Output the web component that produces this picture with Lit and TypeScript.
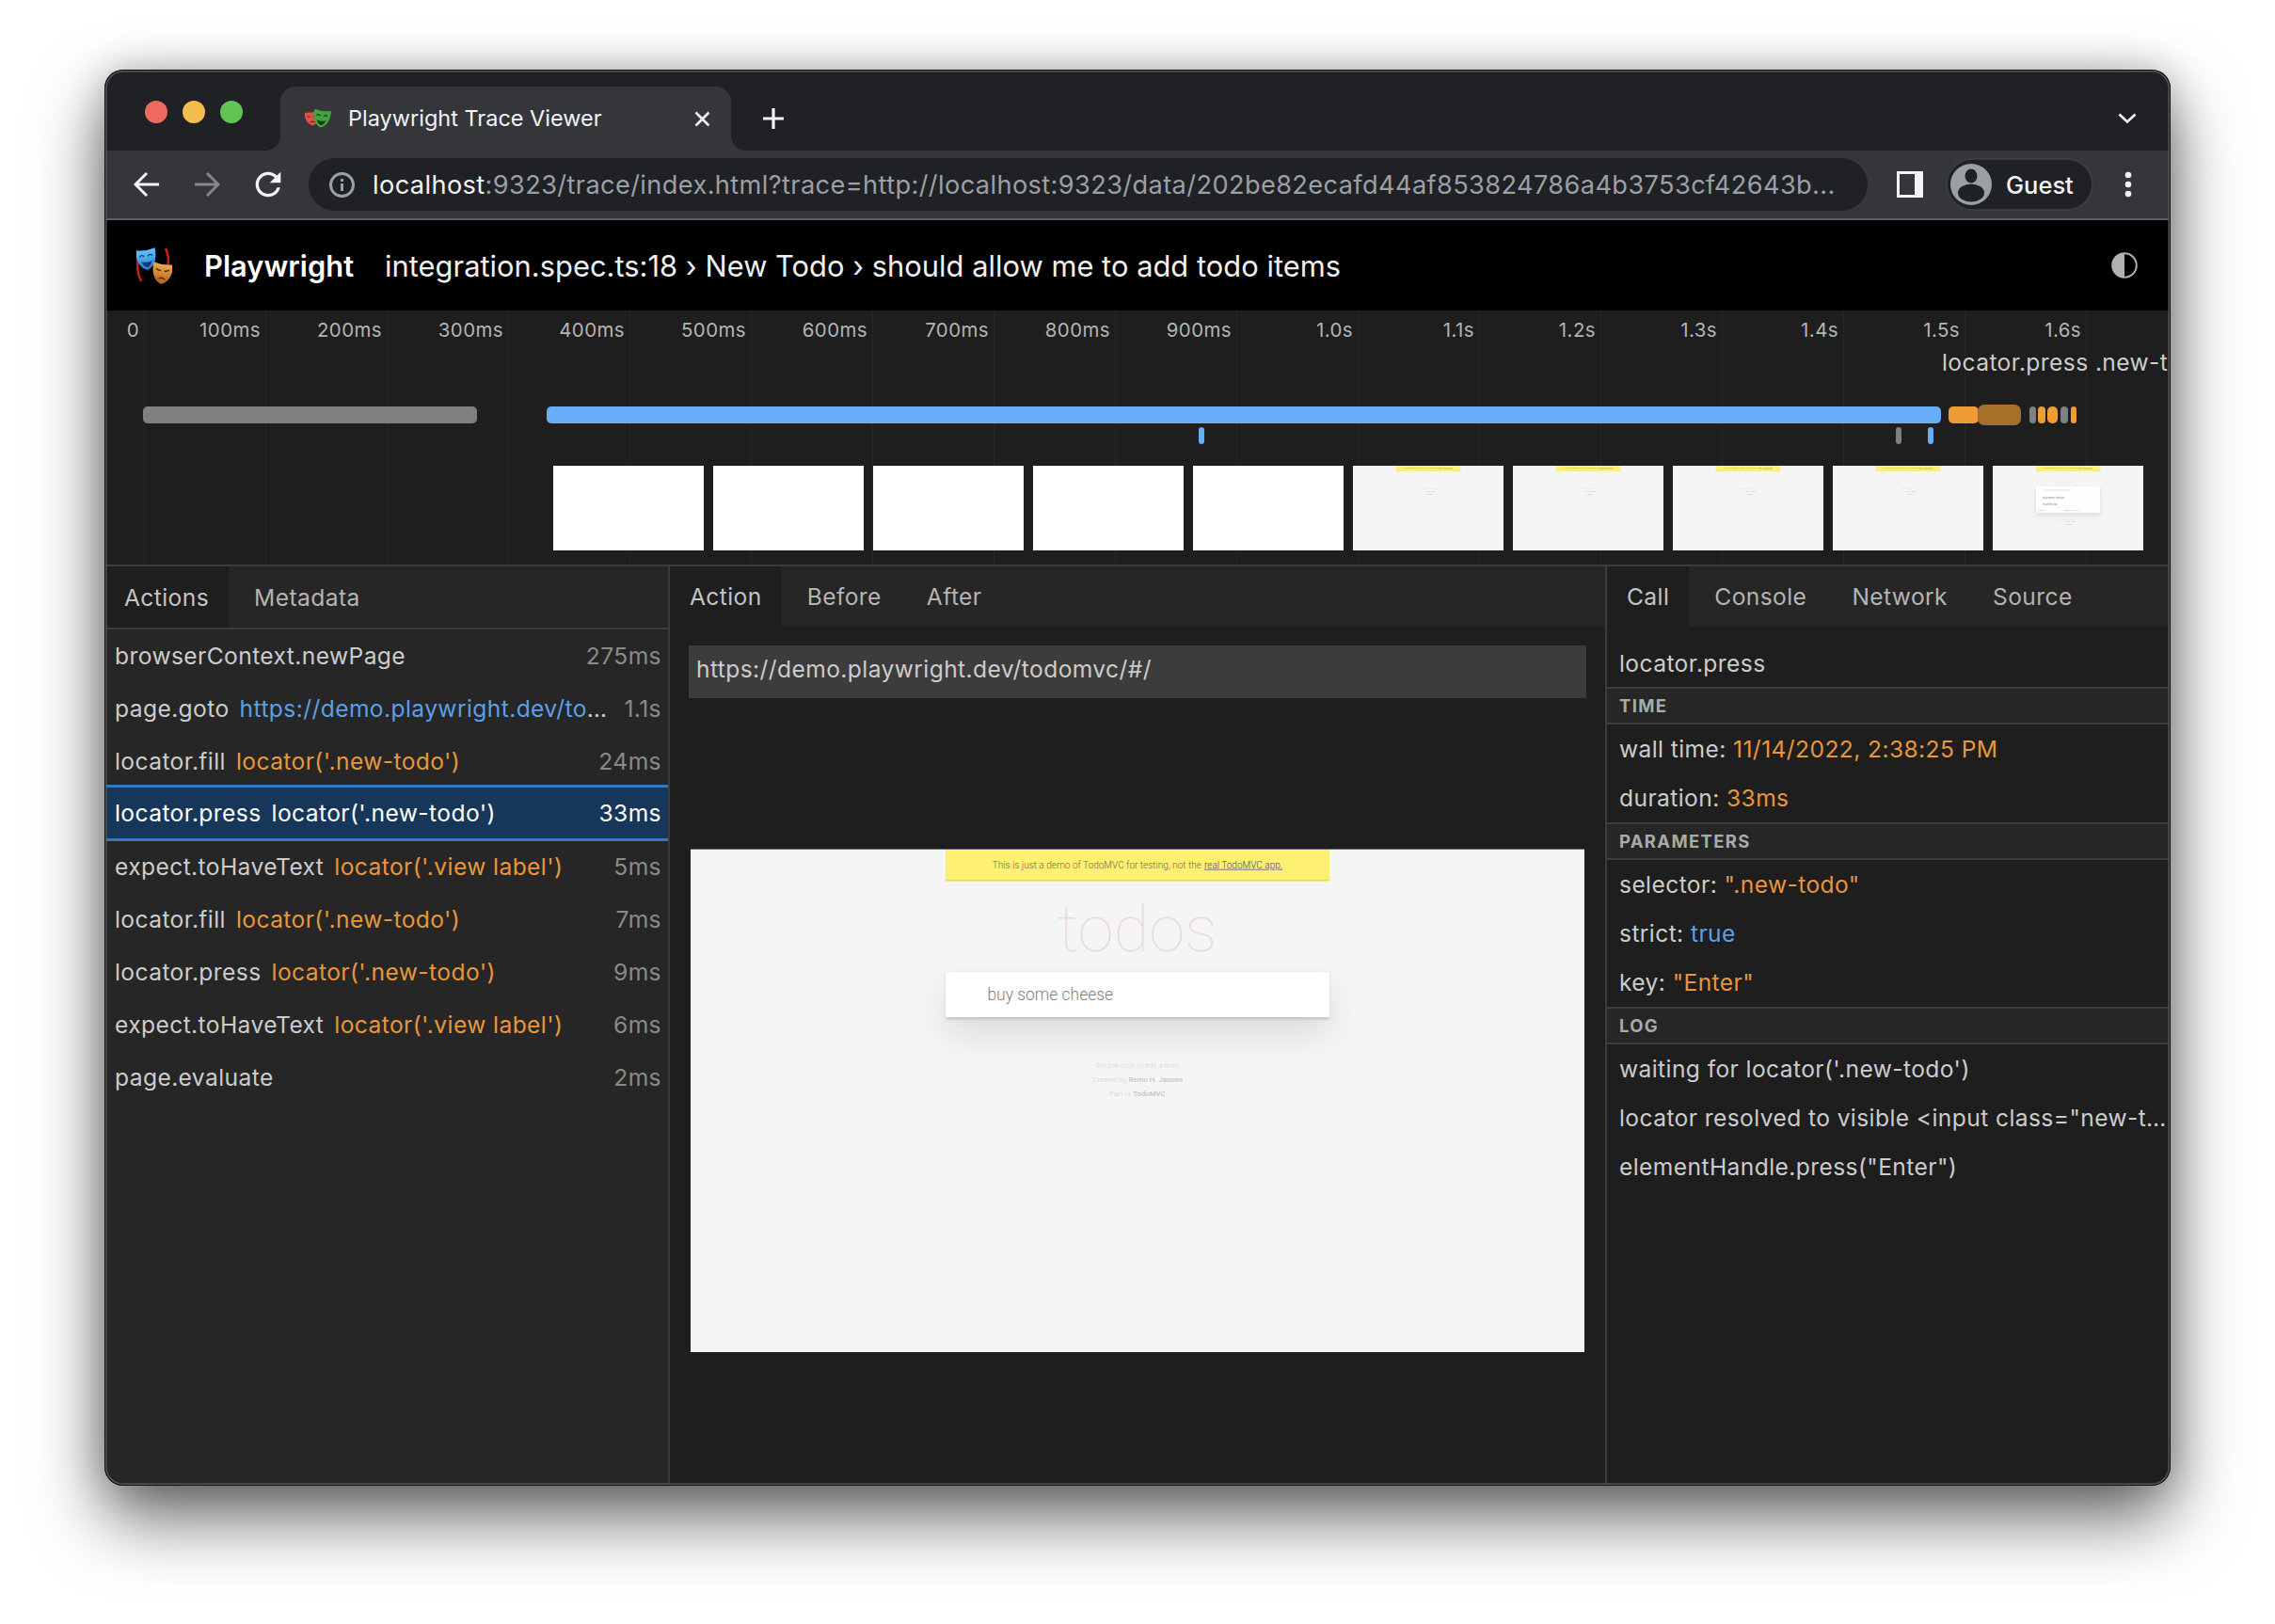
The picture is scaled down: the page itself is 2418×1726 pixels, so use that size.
import { LitElement, css, html, svg } from 'lit';
import { customElement, property } from 'lit/decorators.js';

// ---- trace data ----
const actions = [
  { name: 'browserContext.newPage', time: '275ms' },
  { name: 'page.goto', link: 'https://demo.playwright.dev/todomvc/', time: '1.1s' },
  { name: 'locator.fill', sel: "locator('.new-todo')", time: '24ms' },
  { name: 'locator.press', sel: "locator('.new-todo')", time: '33ms', selected: true },
  { name: 'expect.toHaveText', sel: "locator('.view label')", time: '5ms' },
  { name: 'locator.fill', sel: "locator('.new-todo')", time: '7ms' },
  { name: 'locator.press', sel: "locator('.new-todo')", time: '9ms' },
  { name: 'expect.toHaveText', sel: "locator('.view label')", time: '6ms' },
  { name: 'page.evaluate', time: '2ms' },
];

const tickLabels = ['0', '100ms', '200ms', '300ms', '400ms', '500ms', '600ms', '700ms', '800ms', '900ms',
  '1.0s', '1.1s', '1.2s', '1.3s', '1.4s', '1.5s', '1.6s'];

// x positions are relative to the window's left edge
const bars = [
  { x: 41, w: 355, c: 'gray' },
  { x: 470, w: 1482, c: 'blue' },
  { x: 1960, w: 32, c: 'orange' },
  { x: 1991, w: 46, c: 'sel' },
  { x: 2046, w: 7, c: 'gray' },
  { x: 2055, w: 8, c: 'orange' },
  { x: 2065, w: 11, c: 'orange' },
  { x: 2079, w: 8, c: 'gray' },
  { x: 2090, w: 6, c: 'orange' },
];
const marks = [
  { x: 1163, c: 'blue' },
  { x: 1904, c: 'gray' },
  { x: 1938, c: 'blue' },
];
const shots = ['white', 'white', 'white', 'white', 'white', 'empty', 'empty', 'empty', 'empty', 'list'];

// ---- masks for the logo and the favicon ----
const shield = 'M-10.5,-10.5 Q0,-7.5 10.5,-10.5 C11.5,-2 9,9 0,12 C-9,9 -11.5,-2 -10.5,-10.5Z';
const mask = (x: number, y: number, rot: number, scale: number, fill: string, happy: boolean, ink: string) => svg`
  <g transform="translate(${x} ${y}) rotate(${rot}) scale(${scale})">
    <path d=${shield} fill=${fill}></path>
    ${happy
      ? svg`<path d="M-7,-2.5 Q-4.5,-5.5 -2,-2.5 M2,-2.5 Q4.5,-5.5 7,-2.5" fill="none" stroke=${ink} stroke-width="1.4"></path>
            <path d="M-6,2.5 Q0,5 6,2.5 Q3,9 0,9 Q-3,9 -6,2.5Z" fill=${ink}></path>`
      : svg`<path d="M-7,-4 Q-4.5,-1.5 -2,-2.5 M2,-2.5 Q4.5,-1.5 7,-4" fill="none" stroke=${ink} stroke-width="1.4"></path>
            <path d="M-5,7.5 Q0,1.5 5,7.5 Q0,5 -5,7.5Z" fill=${ink}></path>`}
  </g>`;

@customElement('todo-shot')
export class TodoShot extends LitElement {
  @property() state = 'main';
  @property({ type: Number }) scale = 1;

  static styles = css`
    :host { display: block; overflow: hidden; background: #f5f5f5; }
    .page {
      width: 1280px;
      height: 720px;
      transform-origin: 0 0;
      font-family: Roboto, 'Liberation Sans', sans-serif;
      font-weight: 300;
      letter-spacing: 0;
      color: #4d4d4d;
      background: #f5f5f5;
      display: flex;
      flex-direction: column;
      align-items: center;
    }
    .banner {
      width: 550px;
      height: 45px;
      box-sizing: border-box;
      flex: none;
      background: #fef071;
      border-bottom: 2px solid #e3da60;
      display: flex;
      align-items: center;
      justify-content: center;
      font-size: 13.5px;
      white-space: nowrap;
      color: #6d6b4e;
    }
    .banner a { color: #4b3f8f; text-decoration: underline; margin-left: 4px; }
    h1 {
      margin: 0;
      height: 130px;
      flex: none;
      font-size: 93px;
      line-height: 138px;
      font-weight: 100;
      color: rgba(175, 47, 47, 0.13);
    }
    .box {
      width: 550px;
      flex: none;
      background: #fff;
      box-shadow: 0 2px 4px rgba(0, 0, 0, 0.2), 0 25px 50px rgba(0, 0, 0, 0.1);
    }
    .input {
      height: 65px;
      padding-left: 60px;
      display: flex;
      align-items: center;
      font-size: 23.5px;
      color: #808080;
    }
    .input.hint { font-style: italic; color: #ccc; }
    .item {
      height: 58px;
      padding-left: 60px;
      display: flex;
      align-items: center;
      font-size: 24px;
      border-top: 1px solid #ededed;
      box-sizing: border-box;
    }
    .bottom {
      height: 40px;
      display: flex;
      align-items: center;
      justify-content: space-between;
      padding: 0 15px;
      font-size: 14px;
      color: #777;
      border-top: 1px solid #e6e6e6;
    }
    .bottom span + span { margin-left: 10px; }
    .foot {
      flex: none;
      margin-top: 59px;
      font-size: 10.5px;
      line-height: 20.5px;
      text-align: center;
      color: #d4d4d4;
    }
    .foot b { font-weight: 500; color: #c4c4c4; }
    .empty .foot { margin-top: 145px; }
    .list .foot { margin-top: 50px; }
  `;

  render() {
    if (this.state === 'white') {
      return html`<div class="page" style="background:#fff"></div>`;
    }
    const foot = html`<div class="foot">
      <div>Double-click to edit a todo</div>
      <div>Created by <b>Remo H. Jansen</b></div>
      <div>Part of <b>TodoMVC</b></div>
    </div>`;
    return html`<div class="page ${this.state}" style="transform: scale(${this.scale})">
      <div class="banner">This is just a demo of TodoMVC for testing, not the <a>real TodoMVC app.</a></div>
      ${this.state === 'empty' ? '' : html`<h1>todos</h1>`}
      ${this.state === 'main' ? html`<div class="box"><div class="input">buy some cheese</div></div>` : ''}
      ${this.state === 'list'
        ? html`<div class="box">
            <div class="input hint">What needs to be done?</div>
            <div class="item">buy some cheese</div>
            <div class="item">feed the cat</div>
            <div class="bottom"><span>2 items left</span><span>All Active Completed</span><span></span></div>
          </div>`
        : ''}
      ${foot}
    </div>`;
  }
}

@customElement('app-root')
export class AppRoot extends LitElement {
  static styles = css`
    :host {
      display: block;
      box-sizing: border-box;
      height: 1726px;
      padding: 74px 111px 0;
      background: #fff;
      overflow: hidden;
      font-family: Inter, 'Noto Sans', sans-serif;
      font-size: 24.6px;
      letter-spacing: 0.4px;
      color: #ccc;
    }
    .window {
      position: relative;
      height: 1505px;
      border-radius: 20px;
      overflow: hidden;
      display: flex;
      flex-direction: column;
      background: #1e1e1e;
    }
    .shadow {
      height: 1505px;
      border-radius: 20px;
      box-shadow: 0 34px 75px rgba(0, 0, 0, 0.6), 0 0 40px rgba(0, 0, 0, 0.22);
    }
    .window::after {
      content: '';
      position: absolute;
      inset: 0;
      border-radius: inherit;
      box-shadow: inset 0 0 0 1px #0c0c0c, inset 0 0 0 2.5px #565656;
      pointer-events: none;
    }

    /* browser chrome */
    .tabstrip {
      height: 86px;
      flex: none;
      display: flex;
      align-items: flex-start;
      background: #202124;
      padding: 0 36px 0 43px;
      letter-spacing: 0;
    }
    .lights { display: flex; gap: 16px; margin-top: 33px; }
    .light { width: 24px; height: 24px; border-radius: 50%; }
    .red { background: #ee6a5f; }
    .yellow { background: #f5bd4f; }
    .green { background: #61c454; }
    .tab {
      position: relative;
      width: 479px;
      height: 68px;
      margin: 18px 0 0 40px;
      display: flex;
      align-items: center;
      box-sizing: border-box;
      padding: 0 22px 0 26px;
      background: #35363a;
      border-radius: 16px 16px 0 0;
      color: #f1f3f4;
      font-size: 23.5px;
      white-space: nowrap;
    }
    .tab::before, .tab::after {
      content: '';
      position: absolute;
      bottom: 0;
      width: 16px;
      height: 16px;
    }
    .tab::before { left: -16px; background: radial-gradient(circle at 0 0, #202124 15.5px, #35363a 16.5px); }
    .tab::after { right: -16px; background: radial-gradient(circle at 100% 0, #202124 15.5px, #35363a 16.5px); }
    .tab-title { flex: 1; margin: 0 0 1px 18px; }
    .plus { margin: 40px 0 0 33px; }
    .chevron { margin: 46px 0 0 auto; }

    .toolbar {
      height: 72px;
      flex: none;
      display: flex;
      align-items: center;
      padding-left: 31px;
      background: #35363a;
      border-bottom: 2px solid #5c5d60;
      letter-spacing: 0;
    }
    .back { margin-right: 36px; }
    .forward { margin-right: 31px; }
    .reload { margin-right: 23px; }
    .url {
      width: 1657px;
      height: 56px;
      flex: none;
      box-sizing: border-box;
      display: flex;
      align-items: center;
      padding-left: 22px;
      border-radius: 28px;
      background: #202124;
      color: #9aa0a6;
      font-size: 27.2px;
      letter-spacing: 0.38px;
      white-space: nowrap;
      overflow: hidden;
    }
    .url svg { flex: none; margin-right: 19px; }
    .url b { font-weight: 400; color: #f1f3f4; }
    .side {
      flex: none;
      box-sizing: border-box;
      width: 28px;
      height: 28px;
      margin-left: 31px;
      background: #f1f3f4;
      padding: 3px 9px 3px 3px;
    }
    .side i { display: block; height: 100%; background: #35363a; }
    .guest {
      flex: none;
      box-sizing: border-box;
      width: 157px;
      height: 56px;
      margin-left: 24px;
      display: flex;
      align-items: center;
      gap: 15px;
      padding-left: 3px;
      border-radius: 28px;
      background: #202124;
      border: 2px solid #3c3d41;
      color: #f1f3f4;
      font-size: 25.5px;
      font-weight: 500;
    }
    .dots { flex: none; margin-left: 33px; }

    /* playwright header */
    .header {
      height: 96px;
      flex: none;
      display: flex;
      align-items: center;
      padding: 0 35px 0 34px;
      background: #000;
      color: #f0f0f0;
      font-size: 30.8px;
      letter-spacing: 0.04px;
      white-space: nowrap;
    }
    .brand { font-weight: 600; color: #fff; margin: 0 33px 0 34px; }
    .theme { margin-left: auto; }

    /* timeline: everything in here sits on a time axis */
    .timeline {
      position: relative;
      height: 270px;
      flex: none;
      overflow: hidden;
      background: #1e1e1e;
    }
    .grid { position: absolute; top: 0; bottom: 0; width: 1px; background: #262626; }
    .tick {
      position: absolute;
      top: 8px;
      width: 120px;
      text-align: right;
      font-size: 20.4px;
      letter-spacing: 0.45px;
      line-height: 26px;
      color: #b4b4b4;
    }
    .hover {
      position: absolute;
      left: 1953px;
      top: 38px;
      font-size: 24.6px;
      line-height: 34px;
      white-space: nowrap;
    }
    .bar { position: absolute; top: 102px; height: 18px; border-radius: 5px; }
    .bar.gray { background: #808080; }
    .bar.blue { background: #69aef9; }
    .bar.orange { background: #f09c36; }
    .bar.sel { top: 100px; height: 22px; border-radius: 7px; background: #a66f2a; }
    .mark { position: absolute; top: 124px; width: 6px; height: 18px; border-radius: 3px; }
    .mark.gray { background: #808080; }
    .mark.blue { background: #69aef9; }
    .strip { position: absolute; left: 477px; top: 165px; display: flex; gap: 10px; }
    .strip todo-shot { width: 160px; height: 90px; }

    /* panels */
    .main {
      flex: 1;
      min-height: 0;
      display: flex;
      border-top: 2px solid #3c3c3c;
    }
    .left { width: 601px; flex: none; box-sizing: border-box; background: #262626; border-right: 2px solid #3c3c3c; }
    .center { width: 996px; flex: none; box-sizing: border-box; border-right: 2px solid #3c3c3c; }
    .right { flex: 1; min-width: 0; }
    .tabs { height: 64px; display: flex; gap: 6px; background: #262626; }
    .left .tabs { height: 67px; box-sizing: border-box; border-bottom: 2px solid #3c3c3c; }
    .tabs div { padding: 0 21px; display: flex; align-items: center; color: #b4b4b4; }
    .tabs .on { background: #1e1e1e; color: #c4c4c4; }

    .row {
      height: 56px;
      display: flex;
      align-items: center;
      padding: 0 7px 0 11px;
      white-space: nowrap;
    }
    .row.sel {
      position: relative;
      background: #17375a;
      color: #fff;
      box-shadow: 0 -3px 0 #3478c8, 0 1px 0 #3478c8;
      border-bottom: 2px solid #3478c8;
      box-sizing: border-box;
    }
    .label { flex: 1; min-width: 0; overflow: hidden; text-overflow: ellipsis; }
    .sl { color: #e8963a; margin-left: 11px; }
    .lk { color: #5a9fe8; margin-left: 11px; }
    .row.sel .sl { color: #fff; }
    .dur { flex: none; margin-left: 14px; color: #8a8a8a; }
    .row.sel .dur { color: #fff; }

    .addr {
      height: 56px;
      margin: 20px 20px 0;
      padding: 0 8px 6px;
      box-sizing: border-box;
      display: flex;
      align-items: center;
      background: #3c3c3c;
      color: #ccc;
    }
    .snapshot {
      width: 950px;
      height: 534px;
      margin: 160px 0 0 22px;
      border-top: 1px solid #666;
    }

    .title { height: 64px; box-sizing: border-box; padding: 14px 13px 0; display: flex; align-items: center; }
    .sec {
      height: 40px;
      box-sizing: border-box;
      padding-left: 13px;
      display: flex;
      align-items: center;
      background: #262626;
      border-top: 2px solid #3c3c3c;
      border-bottom: 2px solid #3c3c3c;
      font-size: 18.5px;
      font-weight: 700;
      letter-spacing: 1.3px;
      color: #aaa;
    }
    .line {
      height: 52px;
      line-height: 53px;
      padding: 0 3px 0 13px;
      white-space: nowrap;
      overflow: hidden;
      text-overflow: ellipsis;
    }
    .o { color: #e8963a; }
    .b { color: #5a9fe8; }
  `;

  private renderLogo() {
    return html`<svg width="38" height="39" viewBox="0 0 38 39" style="flex:none">
      <defs>
        <linearGradient id="lb" x1="0" y1="0" x2="0" y2="1"><stop offset="0" stop-color="#5fc6ff"/><stop offset="1" stop-color="#2a7bd0"/></linearGradient>
        <linearGradient id="lo" x1="0" y1="0" x2="0" y2="1"><stop offset="0" stop-color="#f3ab4e"/><stop offset="1" stop-color="#b0611c"/></linearGradient>
      </defs>
      <path d="M2,12 C0,22 2,30 5,36" fill="none" stroke="#c8200f" stroke-width="2.6"/>
      <path d="M31,1 C34,7 35,13 33,21" fill="none" stroke="#c8200f" stroke-width="2.6"/>
      ${mask(10.5, 12, -8, 1, 'url(#lb)', true, '#123a66')}
      ${mask(27.5, 27, 8, 1, 'url(#lo)', false, '#4a2408')}
    </svg>`;
  }

  private renderChrome() {
    return html`
      <div class="tabstrip">
        <div class="lights"><div class="light red"></div><div class="light yellow"></div><div class="light green"></div></div>
        <div class="tab">
          <svg width="28" height="20" viewBox="0 0 28 20" style="flex:none">
            ${mask(7.5, 9.5, -8, 0.68, '#d65348', false, '#6b2019')}
            ${mask(18, 9.5, 8, 0.84, '#45a33f', true, '#143f12')}
          </svg>
          <span class="tab-title">Playwright Trace Viewer</span>
          <svg width="17" height="17" viewBox="0 0 17 17" style="flex:none"><path d="M1.5 1.5L15.5 15.5M15.5 1.5L1.5 15.5" stroke="#f1f3f4" stroke-width="2.6" fill="none"/></svg>
        </div>
        <svg class="plus" width="24" height="24" viewBox="0 0 24 24"><path d="M12 1V23M1 12H23" stroke="#f1f3f4" stroke-width="3.2" fill="none"/></svg>
        <svg class="chevron" width="20" height="11" viewBox="0 0 20 11"><path d="M1.5 1.5L10 9.5L18.5 1.5" stroke="#f1f3f4" stroke-width="2.6" fill="none"/></svg>
      </div>
      <div class="toolbar">
        <svg class="back" width="28" height="28" viewBox="0 0 28 28"><path d="M27 14H2.5M14 2L2 14L14 26" stroke="#f1f3f4" stroke-width="3" fill="none"/></svg>
        <svg class="forward" width="28" height="28" viewBox="0 0 28 28"><path d="M1 14H25.5M14 2L26 14L14 26" stroke="#85868a" stroke-width="3" fill="none"/></svg>
        <svg class="reload" width="40" height="40" viewBox="0 0 24 24"><path fill="#f1f3f4" d="M17.65 6.35A7.958 7.958 0 0 0 12 4c-4.42 0-7.99 3.58-7.99 8s3.57 8 7.99 8c3.73 0 6.84-2.55 7.73-6h-2.08A5.99 5.99 0 0 1 12 18c-3.31 0-6-2.69-6-6s2.69-6 6-6c1.66 0 3.14.69 4.22 1.78L13 11h7V4l-2.35 2.35z"/></svg>
        <div class="url">
          <svg width="27" height="27" viewBox="0 0 27 27"><circle cx="13.5" cy="13.5" r="12" fill="none" stroke="#9aa0a6" stroke-width="3"/><rect x="12" y="7" width="3" height="3" fill="#9aa0a6"/><rect x="12" y="12" width="3" height="8" fill="#9aa0a6"/></svg>
          <span><b>localhost</b>:9323/trace/index.html?trace=http://localhost:9323/data/202be82ecafd44af853824786a4b3753cf42643b...</span>
        </div>
        <div class="side"><i></i></div>
        <div class="guest">
          <svg width="44" height="44" viewBox="0 0 44 44" style="flex:none">
            <clipPath id="av"><circle cx="22" cy="22" r="22"/></clipPath>
            <circle cx="22" cy="22" r="22" fill="#9aa0a6"/>
            <g clip-path="url(#av)" fill="#202124"><ellipse cx="22" cy="13" rx="6.5" ry="7.5"/><ellipse cx="22" cy="31" rx="14" ry="9.5"/></g>
          </svg>
          <span>Guest</span>
        </div>
        <svg class="dots" width="8" height="28" viewBox="0 0 8 28"><circle cx="4" cy="4" r="3.3" fill="#f1f3f4"/><circle cx="4" cy="14" r="3.3" fill="#f1f3f4"/><circle cx="4" cy="24" r="3.3" fill="#f1f3f4"/></svg>
      </div>
      <div class="header">
        ${this.renderLogo()}
        <span class="brand">Playwright</span>
        <span>integration.spec.ts:18 › New Todo › should allow me to add todo items</span>
        <svg class="theme" width="28" height="28" viewBox="0 0 28 28"><circle cx="14" cy="14" r="12.8" fill="none" stroke="#b1b1b1" stroke-width="2"/><path d="M14 1.2A12.8 12.8 0 0 0 14 26.8Z" fill="#b1b1b1"/></svg>
      </div>`;
  }

  private renderTimeline() {
    return html`<div class="timeline">
      ${tickLabels.map((t, i) => {
        const x = 41.5 + 129 * i;
        return html`<div class="grid" style="left:${x}px"></div>
          <div class="tick" style="left:${x - 124.5}px">${t}</div>`;
      })}
      <div class="hover">locator.press .new-todo</div>
      ${bars.map(b => html`<div class="bar ${b.c}" style="left:${b.x}px;width:${b.w}px"></div>`)}
      ${marks.map(m => html`<div class="mark ${m.c}" style="left:${m.x}px"></div>`)}
      <div class="strip">
        ${shots.map(s => html`<todo-shot .state=${s} .scale=${0.125}></todo-shot>`)}
      </div>
    </div>`;
  }

  private renderPanels() {
    return html`<div class="main">
      <div class="left">
        <div class="tabs"><div class="on">Actions</div><div>Metadata</div></div>
        ${actions.map(a => html`<div class="row ${a.selected ? 'sel' : ''}">
          <span class="label">${a.name}${a.sel ? html`<span class="sl">${a.sel}</span>` : ''}${a.link ? html`<span class="lk">${a.link}</span>` : ''}</span>
          <span class="dur">${a.time}</span>
        </div>`)}
      </div>
      <div class="center">
        <div class="tabs"><div class="on">Action</div><div>Before</div><div>After</div></div>
        <div class="addr">https://demo.playwright.dev/todomvc/#/</div>
        <todo-shot class="snapshot" .state=${'main'} .scale=${950 / 1280}></todo-shot>
      </div>
      <div class="right">
        <div class="tabs"><div class="on">Call</div><div>Console</div><div>Network</div><div>Source</div></div>
        <div class="title">locator.press</div>
        <div class="sec">TIME</div>
        <div class="line">wall time: <span class="o">11/14/2022, 2:38:25 PM</span></div>
        <div class="line">duration: <span class="o">33ms</span></div>
        <div class="sec">PARAMETERS</div>
        <div class="line">selector: <span class="o">".new-todo"</span></div>
        <div class="line">strict: <span class="b">true</span></div>
        <div class="line">key: <span class="o">"Enter"</span></div>
        <div class="sec">LOG</div>
        <div class="line">waiting for locator('.new-todo')</div>
        <div class="line">locator resolved to visible &lt;input class="new-todo" placeholder="What needs to be done?"&gt;</div>
        <div class="line">elementHandle.press("Enter")</div>
      </div>
    </div>`;
  }

  render() {
    return html`<div class="shadow">
      <div class="window">
        ${this.renderChrome()}
        ${this.renderTimeline()}
        ${this.renderPanels()}
      </div>
    </div>`;
  }
}
